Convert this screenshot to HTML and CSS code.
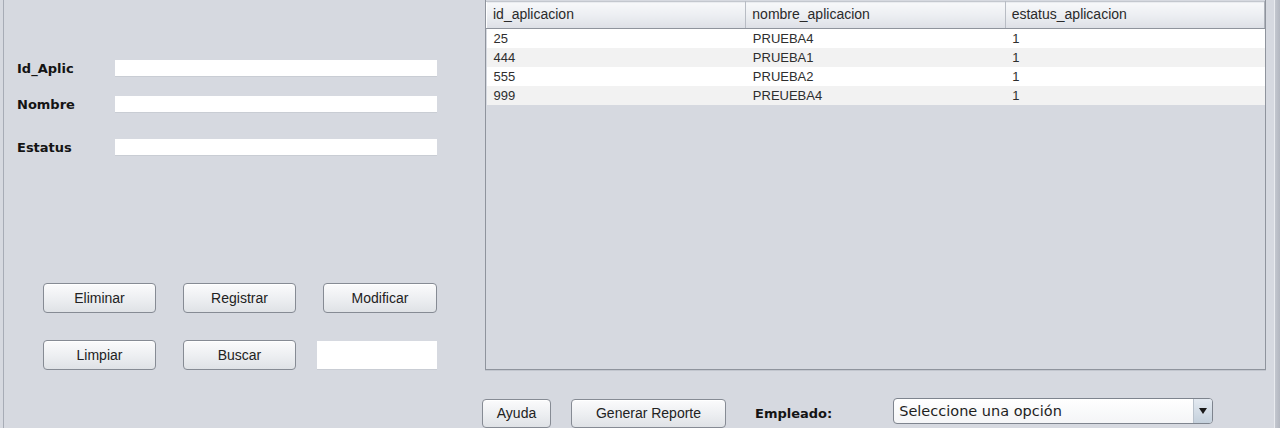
FILE: index.html
```html
<!DOCTYPE html>
<html lang="es">
<head>
<meta charset="utf-8">
<title>Aplicaciones</title>
<link rel="stylesheet" href="styles.css">
</head>
<body>
<div class="window">
  <div class="frame">
    <div class="left">
      <div class="form">
        <div class="frow r1"><label class="lbl">Id_Aplic</label><div class="field"></div></div>
        <div class="frow r2"><label class="lbl">Nombre</label><div class="field"></div></div>
        <div class="frow r3"><label class="lbl">Estatus</label><div class="field"></div></div>
      </div>
      <div class="btns">
        <button class="btn">Eliminar</button>
        <button class="btn">Registrar</button>
        <button class="btn">Modificar</button>
        <button class="btn">Limpiar</button>
        <button class="btn">Buscar</button>
        <div class="field search"></div>
      </div>
    </div>
    <div class="right">
      <div class="pane">
        <table class="grid">
          <thead>
            <tr><th>id_aplicacion</th><th>nombre_aplicacion</th><th>estatus_aplicacion</th></tr>
          </thead>
          <tbody>
            <tr><td>25</td><td>PRUEBA4</td><td>1</td></tr>
            <tr><td>444</td><td>PRUEBA1</td><td>1</td></tr>
            <tr><td>555</td><td>PRUEBA2</td><td>1</td></tr>
            <tr><td>999</td><td>PREUEBA4</td><td>1</td></tr>
          </tbody>
        </table>
      </div>
      <div class="bottom">
        <button class="btn ayuda">Ayuda</button>
        <button class="btn reporte">Generar Reporte</button>
        <span class="lbl emp">Empleado:</span>
        <div class="combo"><span class="ctext">Seleccione una opción</span><span class="carrow"><svg width="8" height="6" viewBox="0 0 8 6"><path d="M0 0H8L4 6Z" fill="#1a1a1a"/></svg></span></div>
      </div>
    </div>
    <div class="edge"></div>
  </div>
</div>
</body>
</html>
```
FILE: styles.css
```css
* { box-sizing: border-box; }
html, body { margin: 0; padding: 0; }
body {
  width: 1280px;
  height: 428px;
  overflow: hidden;
  background: #d6d9e0;
  font-family: "Liberation Sans", Arial, sans-serif;
}
.window {
  height: 428px;
  padding-left: 3px;
  background: #d6d9e0;
}
.frame {
  display: flex;
  height: 100%;
  border-left: 1px solid #a7acb6;
}
.left {
  width: 481px;
  flex: none;
  padding-top: 60px;
}
.form { padding-left: 13px; }
.frow {
  display: flex;
  align-items: center;
  height: 16px;
}
.r2 { margin-top: 20px; }
.r3 { margin-top: 27px; }
.lbl {
  font-family: "DejaVu Sans", sans-serif;
  font-weight: bold;
  font-size: 13px;
  color: #141414;
  width: 98px;
  flex: none;
}
.field {
  width: 322px;
  height: 16px;
  background: #ffffff;
  box-shadow: 0 1px 0 #c9cdd4;
}
.btns {
  display: grid;
  grid-template-columns: 113px 113px 114px;
  column-gap: 27px;
  row-gap: 27px;
  margin-top: 128px;
  padding-left: 39px;
}
.btn {
  height: 30px;
  border: 1px solid #868b94;
  border-radius: 4px;
  background: linear-gradient(#fbfbfc, #eceef1 55%, #dfe2e6);
  box-shadow: inset 0 1px 0 #ffffff;
  font-family: "Liberation Sans", Arial, sans-serif;
  font-size: 14px;
  color: #222;
  padding: 0;
  margin: 0;
}
.search {
  width: 120px;
  height: 28px;
  margin-top: 1px;
  margin-left: -6px;
}
.right {
  width: 781px;
  flex: none;
  display: flex;
  flex-direction: column;
}
.pane {
  height: 370px;
  border: 1px solid #8f949d;
  border-top: 0;
  box-shadow: 0 1px 0 #c2c6ce;
  background: #d6d9e0;
  padding-top: 1px;
}
.grid {
  width: 100%;
  border-collapse: collapse;
  table-layout: fixed;
}
.grid th {
  height: 27px;
  text-align: left;
  font-weight: normal;
  font-size: 14px;
  color: #2a2a2a;
  padding: 0 0 2px 6px;
  background: linear-gradient(#f7f8fa, #eceef2 50%, #dde0e6);
  border-top: 1px solid #c3c7ce;
  border-right: 1px solid #b8bcc4;
  border-bottom: 1px solid #8f949d;
  border-left: 1px solid #ffffff;
}
.grid th:last-child { border-right: 1px solid #b0b4bc; }
.grid td {
  height: 19px;
  padding: 0 0 0 7px;
  font-size: 13px;
  color: #2e2e2e;
  background: #ffffff;
  line-height: 19px;
}
.grid tbody tr:nth-child(even) td { background: #f2f2f2; }
.bottom {
  display: flex;
  align-items: center;
  margin-top: 29px;
  padding-left: 0;
  height: 28px;
}
.ayuda {
  width: 69px;
  height: 29px;
  margin-left: -3px;
}
.reporte {
  width: 155px;
  height: 29px;
  margin-left: 20px;
}
.emp {
  width: auto;
  margin-left: 29px;
  font-size: 13px;
}
.combo {
  display: flex;
  width: 320px;
  height: 26px;
  margin-left: 61px;
  margin-top: -4px;
  border: 1px solid #7e848e;
  border-radius: 4px;
  overflow: hidden;
  background: linear-gradient(#ffffff, #f4f5f7);
}
.ctext {
  flex: 1;
  font-family: "DejaVu Sans", sans-serif;
  font-size: 14.5px;
  color: #1e1e1e;
  padding-left: 5px;
  line-height: 24px;
}
.carrow {
  width: 19px;
  flex: none;
  display: flex;
  align-items: center;
  justify-content: center;
  border-left: 1px solid #b9c2cc;
  background: linear-gradient(#e4eaf1, #c4d0dc);
}
.edge {
  margin-left: auto;
  width: 6px;
  border-left: 1px solid #e9ebef;
  background: linear-gradient(90deg, #c3c7cf, #b3b7c0);
}
```
